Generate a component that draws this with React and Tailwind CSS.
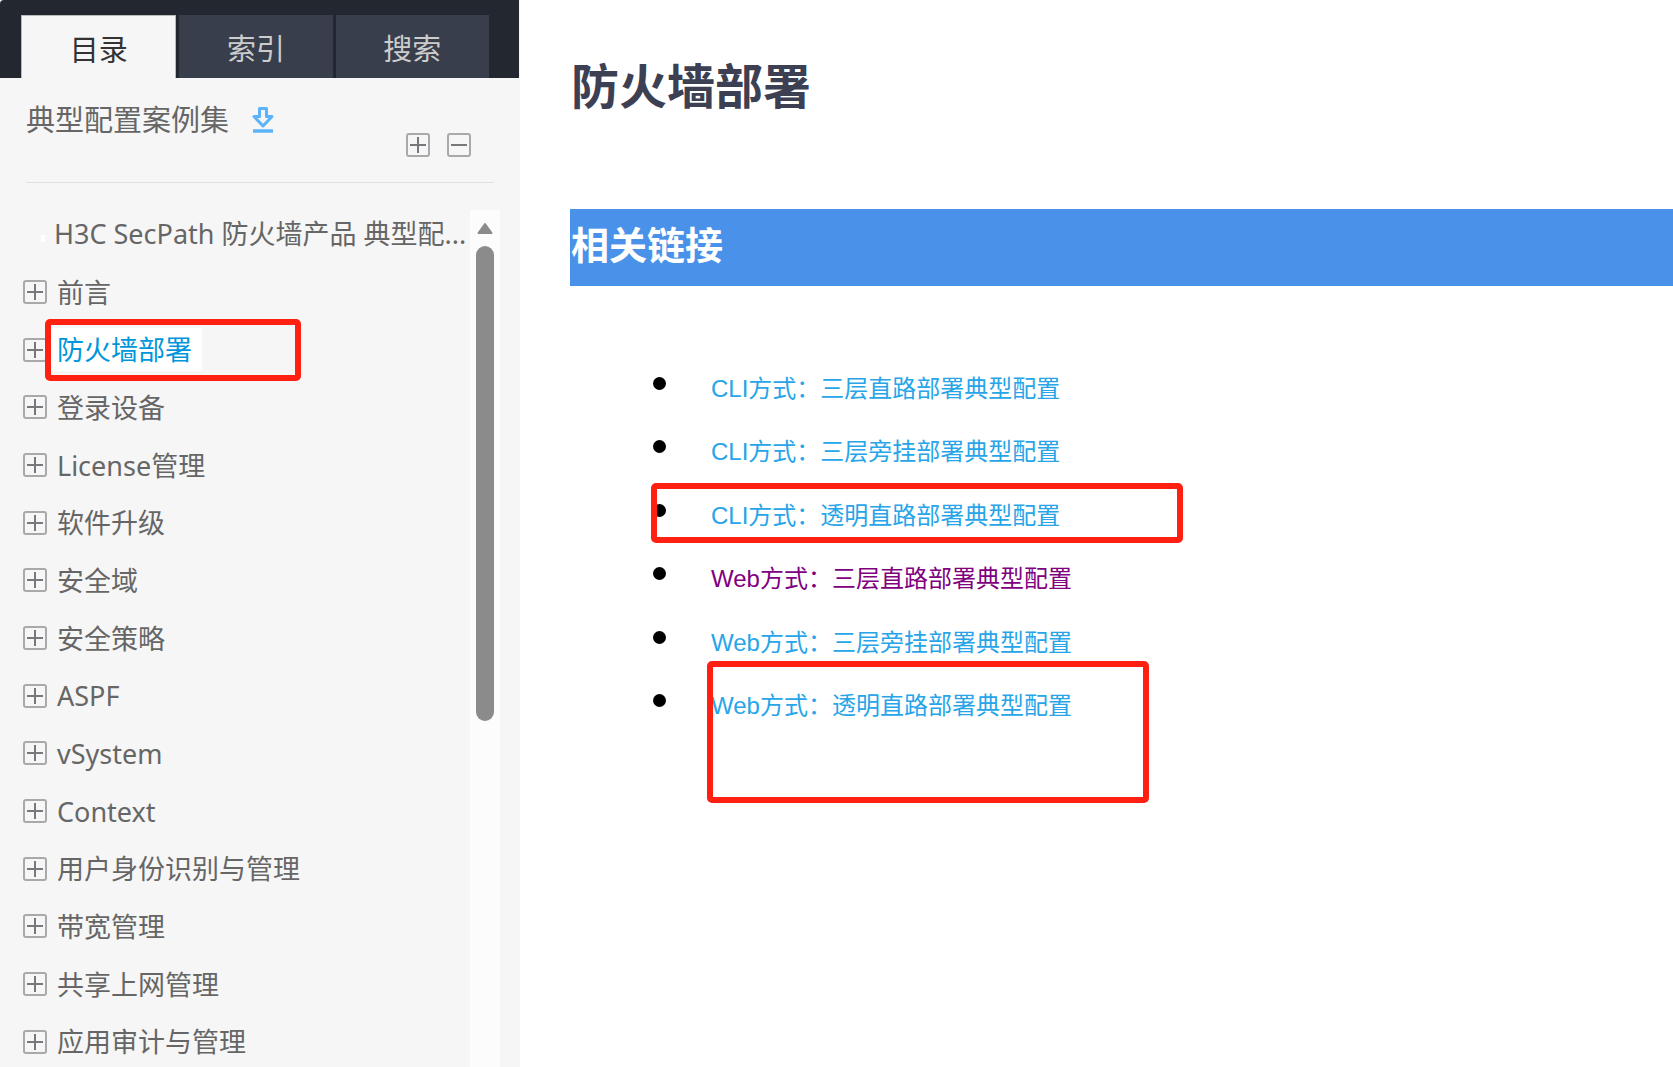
import React, { useState } from 'react'

const TABS = ['目录', '索引', '搜索']

const CHAPTERS = [
  '前言',
  '防火墙部署',
  '登录设备',
  'License管理',
  '软件升级',
  '安全域',
  '安全策略',
  'ASPF',
  'vSystem',
  'Context',
  '用户身份识别与管理',
  '带宽管理',
  '共享上网管理',
  '应用审计与管理',
]

const LINKS = [
  { text: 'CLI方式：三层直路部署典型配置' },
  { text: 'CLI方式：三层旁挂部署典型配置' },
  {
    text: 'CLI方式：透明直路部署典型配置',
    mark: '-left-2 top-0 h-[60px] w-[532px]',
  },
  { text: 'Web方式：三层直路部署典型配置', visited: true },
  { text: 'Web方式：三层旁挂部署典型配置' },
  {
    text: 'Web方式：透明直路部署典型配置',
    mark: 'left-12 -top-3 h-[142px] w-[442px]',
  },
]

const BoxIcon = ({ plus }) => (
  <svg className="h-6 w-6 shrink-0" viewBox="0 0 24 24" fill="none">
    <rect x="1" y="1" width="22" height="22" rx="2" stroke="#a9a9ac" strokeWidth="2" />
    <path d="M4 12h16" stroke="#77777c" strokeWidth="2" />
    {plus && <path d="M12 4v16" stroke="#77777c" strokeWidth="2" />}
  </svg>
)

const DownloadIcon = () => (
  <svg className="h-7 w-6" viewBox="0 0 24 28" fill="none" stroke="#5ab3fb">
    <path d="M8.500 2.500h7v8h5.500L12 20 3 10.500h5.500z" strokeWidth="3" strokeLinejoin="round" />
    <path d="M2 25h20" strokeWidth="3.500" />
  </svg>
)

// red frame drawn over the page
const Mark = ({ className }) => (
  <span
    className={`pointer-events-none absolute rounded-[5px] border-[6px] border-[#ff2011] ${className}`}
  />
)

const Scrollbar = () => (
  <div className="flex w-[30px] shrink-0 flex-col items-center bg-[#fcfcfc] pt-3">
    <svg className="h-3 w-4" viewBox="0 0 16 12">
      <path
        d="M8 2L14.500 11h-13z"
        fill="#8b8b8b"
        stroke="#8b8b8b"
        strokeWidth="2"
        strokeLinejoin="round"
      />
    </svg>
    <div className="mt-3 h-[475px] w-[18px] rounded-full bg-[#8b8b8b]" />
  </div>
)

const Sidebar = () => {
  const [tab, setTab] = useState('目录')
  const [current, setCurrent] = useState('防火墙部署')

  return (
    <aside className="flex w-[520px] shrink-0 flex-col bg-[#f6f6f6] font-['Noto_Sans','Noto_Sans_CJK_SC',sans-serif] text-[#666]">
      <div className="mr-px flex gap-[3px] rounded-tl-sm bg-[#23272f] pl-[21px] pr-[30px] pt-[15px]">
        {TABS.map((name) => (
          <button
            key={name}
            onClick={() => setTab(name)}
            className={`h-[63px] flex-1 text-[29px] leading-10 ${
              tab === name
                ? 'border border-b-0 border-[#bbb] bg-[#f6f6f6] pt-1.5 text-[#333]'
                : 'bg-[#383e4b] pt-1 text-[#ccc]'
            }`}
          >
            {name}
          </button>
        ))}
      </div>

      <div className="mx-[26px] flex h-[105px] items-start border-b border-[#e0e0e0]">
        <h2 className="pt-[22px] text-[29px] leading-10">典型配置案例集</h2>
        <button aria-label="下载" className="ml-[22px] mt-7">
          <DownloadIcon />
        </button>
        <div className="ml-auto mr-[23px] mt-[55px] flex gap-[17px]">
          <button aria-label="展开">
            <BoxIcon plus />
          </button>
          <button aria-label="折叠">
            <BoxIcon />
          </button>
        </div>
      </div>

      <div className="mr-5 mt-[27px] flex min-h-0 flex-1">
        <nav className="min-w-0 flex-1 overflow-hidden pl-[23px] text-[27px] leading-[43px]">
          <div className="flex h-[53px] items-start pt-0.5">
            <span className="ml-[18px] mt-[23px] h-[7px] w-1 bg-white" />
            <a href="#top" className="ml-[9px] whitespace-nowrap">
              H3C SecPath 防火墙产品 典型配...
            </a>
          </div>
          <ul>
            {CHAPTERS.map((name) => (
              <li
                key={name}
                className="relative flex h-[58px] items-center nth-[3n+2]:h-[57px]"
              >
                <button aria-label={`展开 ${name}`}>
                  <BoxIcon plus />
                </button>
                <a
                  href="#chapter"
                  onClick={() => setCurrent(name)}
                  className={`ml-1 whitespace-nowrap pl-1.5 pr-[10px] ${
                    current === name ? 'bg-white text-[#0096db]' : ''
                  }`}
                >
                  {name}
                </a>
                {name === '防火墙部署' && <Mark className="left-[22px] -top-0.5 h-[62px] w-64" />}
              </li>
            ))}
          </ul>
        </nav>
        <Scrollbar />
      </div>
    </aside>
  )
}

const App = () => {
  return (
    <div className="flex h-screen overflow-hidden bg-white">
      <Sidebar />
      <main className="min-w-0 flex-1 pl-[50px] pt-[52px] font-['Liberation_Sans','Noto_Sans_CJK_SC',sans-serif]">
        <h1 className="pl-px text-5xl font-bold leading-[72px] text-[#3c4052]">防火墙部署</h1>
        <h2 className="mt-[85px] h-[77px] bg-[#4a92e9] pl-px text-[38px] font-bold leading-[74px] text-white">
          相关链接
        </h2>
        <ul className="mt-[70px] pl-[89px] text-2xl">
          {LINKS.map(({ text, visited, mark }) => (
            <li key={text} className="relative flex h-[63px] items-start even:h-16">
              <span className="-ml-[6px] mt-[21px] h-[13px] w-[13px] shrink-0 rounded-full bg-black" />
              <a
                href="#case"
                className={`ml-[45px] mt-[15px] leading-9 ${visited ? 'text-[#800080]' : 'text-[#27a5e8]'}`}
              >
                {text}
              </a>
              {mark && <Mark className={mark} />}
            </li>
          ))}
        </ul>
      </main>
    </div>
  )
}

export default App
